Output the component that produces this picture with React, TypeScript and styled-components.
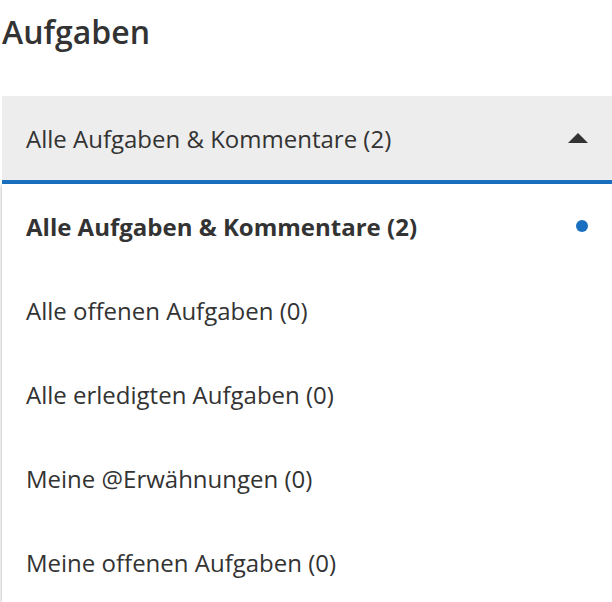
import { FC } from 'react';
import styled, { createGlobalStyle } from 'styled-components';

const GlobalStyle = createGlobalStyle`
  body {
    margin: 0;
    background: #fff;
    font-family: 'Open Sans', 'Liberation Sans', sans-serif;
    color: #333;
  }
`;

const options = [
  'Alle Aufgaben & Kommentare (2)',
  'Alle offenen Aufgaben (0)',
  'Alle erledigten Aufgaben (0)',
  'Meine @Erwähnungen (0)',
  'Meine offenen Aufgaben (0)',
];

const App: FC = (): JSX.Element => {
  const selected = 0;

  return (
    <>
      <GlobalStyle />
      <Wrapper>
        <Title>Aufgaben</Title>

        <Select>
          <span>{options[selected]}</span>
          <Caret />
        </Select>

        <Menu>
          {options.map((opt, i) => (
            <Option key={opt} active={i === selected}>
              <span>{opt}</span>
              {i === selected && <Dot />}
            </Option>
          ))}
        </Menu>
      </Wrapper>
    </>
  );
};

const Wrapper = styled.main`
  padding-left: 2px;
  width: 610px;
`;

const Title = styled.h1`
  margin: 0;
  height: 96px;
  padding-top: 11px;
  box-sizing: border-box;
  font-size: 32px;
  font-weight: 600;
  line-height: 42px;
  color: #333;
`;

const Select = styled.div`
  display: flex;
  align-items: center;
  justify-content: space-between;
  height: 84px;
  padding: 0 24px;
  background: #ededed;
  border-bottom: 4px solid #1a70c0;
  font-size: 24px;
  color: #333;
`;

const Caret = styled.span`
  width: 0;
  height: 0;
  border-left: 10px solid transparent;
  border-right: 10px solid transparent;
  border-bottom: 10px solid #333;
`;

const Menu = styled.ul`
  list-style: none;
  margin: 0;
  padding: 0;
  box-shadow: -2px 0 3px -1px rgba(0, 0, 0, 0.22);
`;

const Option = styled.li<{ active: boolean }>`
  display: flex;
  align-items: center;
  justify-content: space-between;
  height: 84px;
  padding: 0 24px;
  font-size: 24px;
  font-weight: ${(p) => (p.active ? 700 : 400)};
  color: #333;
`;

const Dot = styled.span`
  width: 12px;
  height: 12px;
  border-radius: 50%;
  background: #1a70c0;
`;

export default App;
